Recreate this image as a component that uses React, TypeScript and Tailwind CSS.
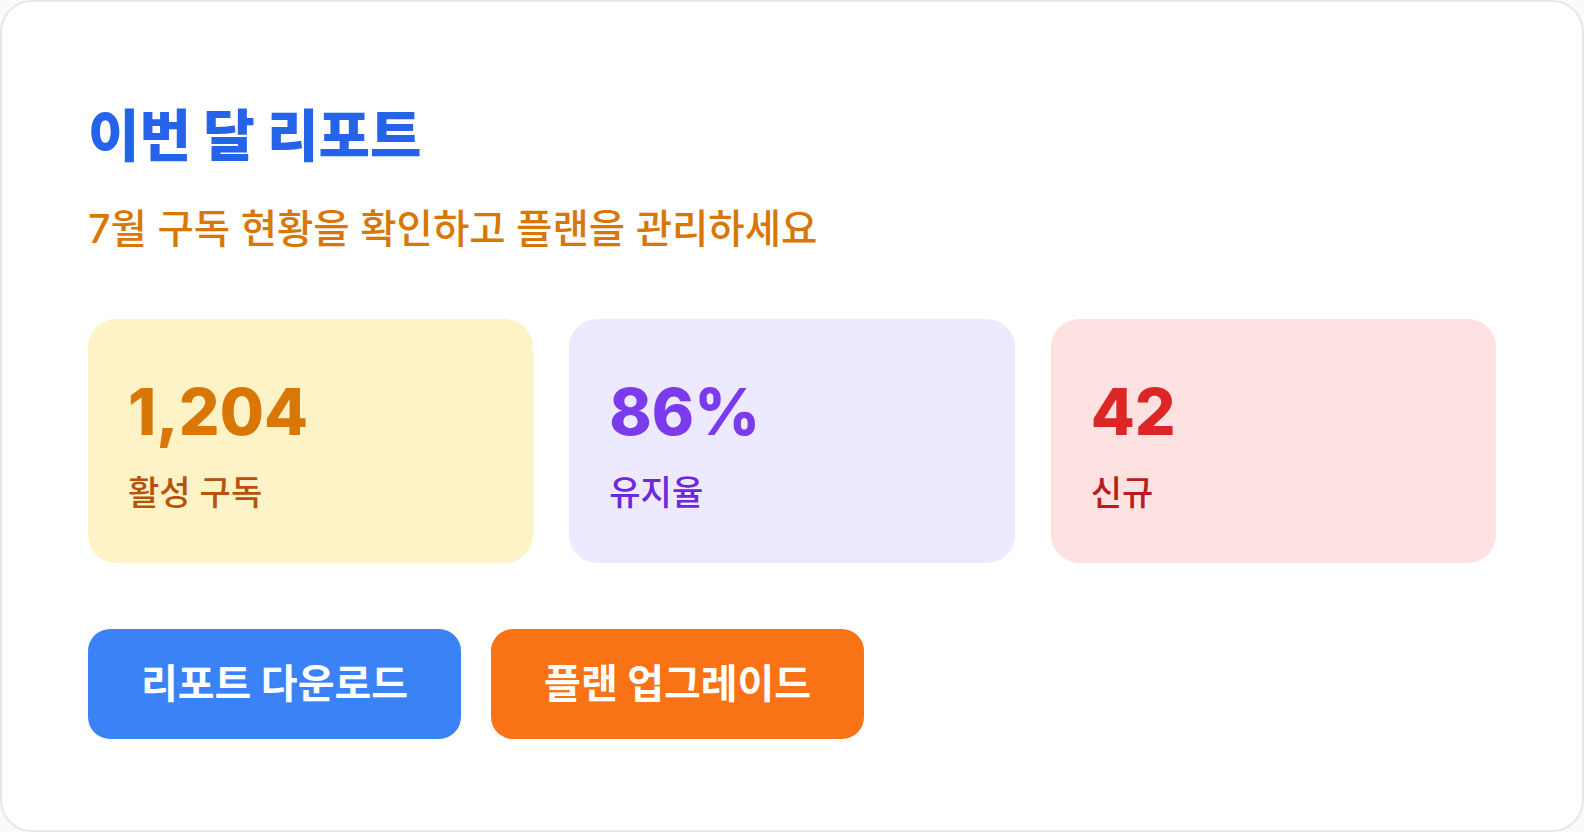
import type { ReactNode } from "react";

const FONT = "font-['Inter','Noto_Sans_CJK_KR',sans-serif]";

type Stat = {
  value: string;
  label: string;
  card: string;
  valueColor: string;
  labelColor: string;
};

const STATS: Stat[] = [
  { value: "1,204", label: "활성 구독", card: "bg-[#fef3c7]", valueColor: "text-[#d97706]", labelColor: "text-[#b45309]" },
  { value: "86%", label: "유지율", card: "bg-[#ede9fe]", valueColor: "text-[#7c3aed]", labelColor: "text-[#6d28d9]" },
  { value: "42", label: "신규", card: "bg-[#fee2e2]", valueColor: "text-[#dc2626]", labelColor: "text-[#b91c1c]" },
];

function StatCard({ stat }: { stat: Stat }) {
  return (
    <div className={`rounded-[28px] px-10 pt-[61px] pb-[46px] ${stat.card}`}>
      <p className={`text-[64px] leading-none font-extrabold ${stat.valueColor}`}>{stat.value}</p>
      <p className={`mt-[25px] text-[34px] leading-[48px] font-medium ${stat.labelColor}`}>{stat.label}</p>
    </div>
  );
}

function ActionButton({ className, children }: { className: string; children: ReactNode }) {
  return (
    <button
      type="button"
      className={`rounded-[22px] px-[53px] py-7 text-[40px] leading-[54px] font-bold text-white ${className}`}
    >
      {children}
    </button>
  );
}

export default function App() {
  return (
    <div className={`h-[832px] w-full bg-gray-50 ${FONT}`}>
      <section className="h-full w-full rounded-[32px] border-2 border-[#e5e7eb] bg-white px-[86px] pt-[106px]">
        <h1 className="text-[56px] leading-none font-extrabold text-[#2563eb]">이번 달 리포트</h1>
        <p className="mt-[46px] text-[39.5px] leading-none font-medium text-[#d97706]">
          7월 구독 현황을 확인하고 플랜을 관리하세요
        </p>

        <div className="mt-[69px] grid grid-cols-3 gap-9">
          {STATS.map((s) => (
            <StatCard key={s.label} stat={s} />
          ))}
        </div>

        <div className="mt-[66px] flex gap-[30px]">
          <ActionButton className="bg-[#3b82f6]">리포트 다운로드</ActionButton>
          <ActionButton className="bg-[#f97316]">플랜 업그레이드</ActionButton>
        </div>
      </section>
    </div>
  );
}
